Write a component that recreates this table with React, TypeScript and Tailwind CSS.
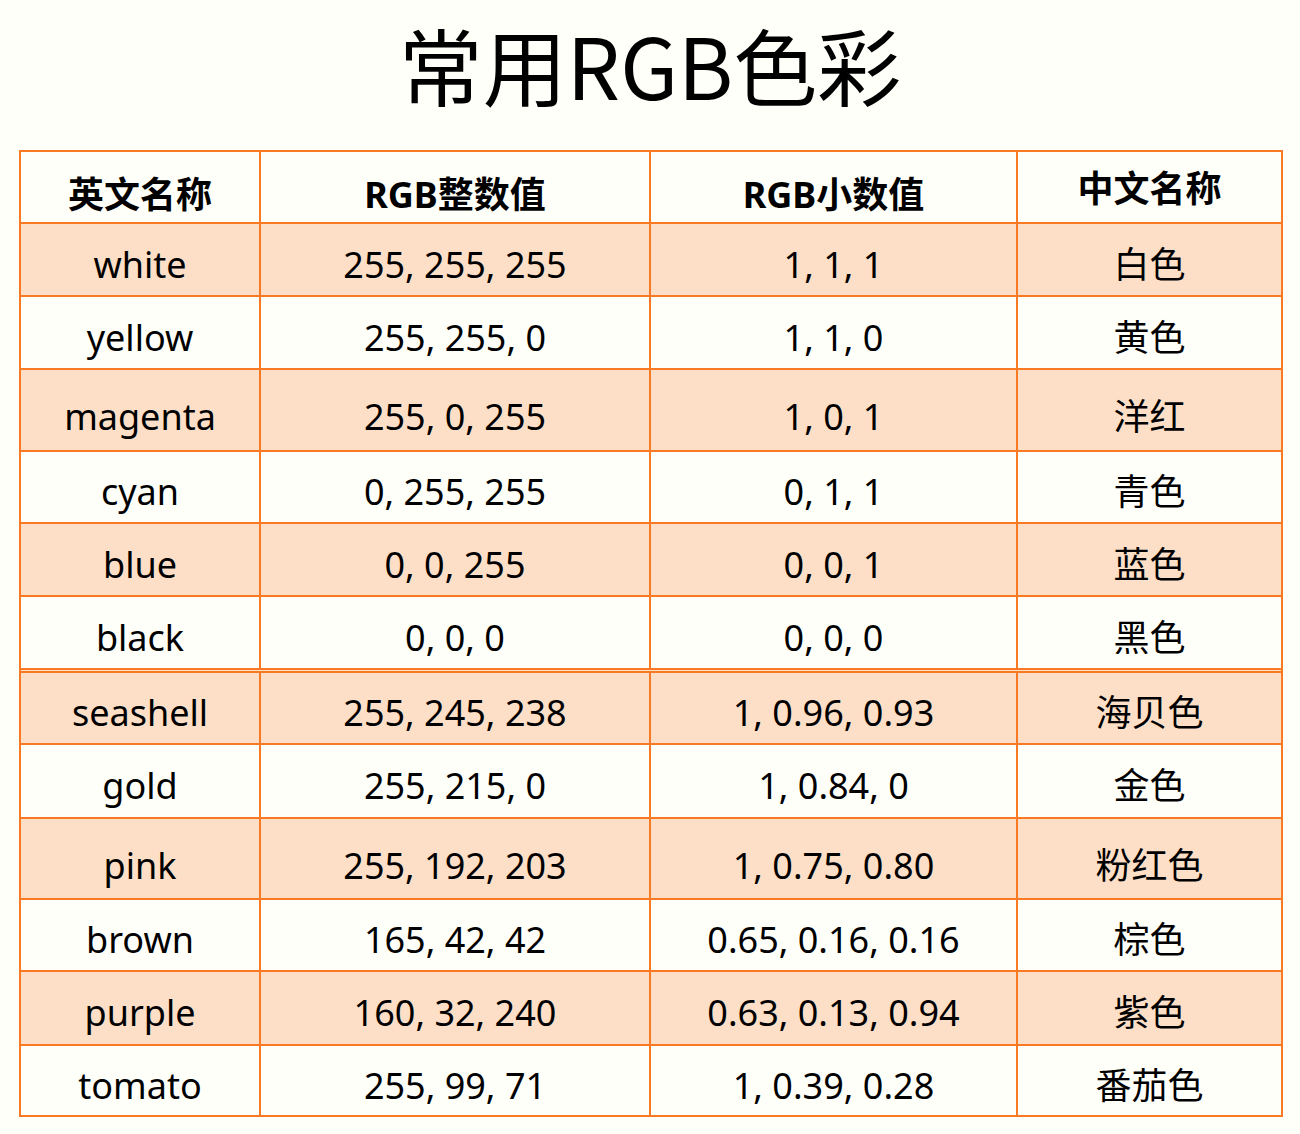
import React from "react";

type Row = {
  en: string;
  int: string;
  dec: string;
  zh: string;
  h: string;
  peach: boolean;
  border: string;
  pt: string;
};

const rows: Row[] = [
  { en: "white", int: "255, 255, 255", dec: "1, 1, 1", zh: "白色", h: "h-[73px]", peach: true, border: "border-t-2", pt: "pt-[10px]" },
  { en: "yellow", int: "255, 255, 0", dec: "1, 1, 0", zh: "黄色", h: "h-[73px]", peach: false, border: "border-t-2", pt: "pt-[10px]" },
  { en: "magenta", int: "255, 0, 255", dec: "1, 0, 1", zh: "洋红", h: "h-[82px]", peach: true, border: "border-t-2", pt: "pt-[14px]" },
  { en: "cyan", int: "0, 255, 255", dec: "0, 1, 1", zh: "青色", h: "h-[72px]", peach: false, border: "border-t-2", pt: "pt-[10px]" },
  { en: "blue", int: "0, 0, 255", dec: "0, 0, 1", zh: "蓝色", h: "h-[73px]", peach: true, border: "border-t-2", pt: "pt-[10px]" },
  { en: "black", int: "0, 0, 0", dec: "0, 0, 0", zh: "黑色", h: "h-[73px]", peach: false, border: "border-t-2", pt: "pt-[10px]" },
  { en: "seashell", int: "255, 245, 238", dec: "1, 0.96, 0.93", zh: "海贝色", h: "h-[75px]", peach: true, border: "border-t-[5px] border-double", pt: "pt-[10px]" },
  { en: "gold", int: "255, 215, 0", dec: "1, 0.84, 0", zh: "金色", h: "h-[74px]", peach: false, border: "border-t-2", pt: "pt-[10px]" },
  { en: "pink", int: "255, 192, 203", dec: "1, 0.75, 0.80", zh: "粉红色", h: "h-[81px]", peach: true, border: "border-t-2", pt: "pt-[14px]" },
  { en: "brown", int: "165, 42, 42", dec: "0.65, 0.16, 0.16", zh: "棕色", h: "h-[72px]", peach: false, border: "border-t-2", pt: "pt-[10px]" },
  { en: "purple", int: "160, 32, 240", dec: "0.63, 0.13, 0.94", zh: "紫色", h: "h-[74px]", peach: true, border: "border-t-2", pt: "pt-[10px]" },
  { en: "tomato", int: "255, 99, 71", dec: "1, 0.39, 0.28", zh: "番茄色", h: "h-[71px]", peach: false, border: "border-t-2", pt: "pt-[10px]" },
];

const cols = "grid grid-cols-[238px_390px_367px_265px]";

export default function App() {
  return (
    <div
      className="w-[1300px] h-[1134px] bg-[#fffffa] text-black"
      style={{ fontFamily: '"Noto Sans", "Noto Sans CJK SC", sans-serif' }}
    >
      <div className="h-[150px] pt-[22px] flex justify-center">
        <h1
          className="text-[84px] leading-none font-normal"
          style={{ fontFamily: '"Noto Sans CJK SC", sans-serif' }}
        >
          常用RGB色彩
        </h1>
      </div>
      <div className="ml-[19px] w-[1264px] border-2 border-[#f97a22]">
        <div className={`${cols} h-[70px] font-bold text-[36px]`}>
          <div className="flex items-center justify-center pt-4">英文名称</div>
          <div className="flex items-center justify-center pt-4 border-l-2 border-[#f97a22]">RGB整数值</div>
          <div className="flex items-center justify-center pt-4 border-l-2 border-[#f97a22]">RGB小数值</div>
          <div className="flex items-center justify-center pt-1 border-l-2 border-[#f97a22]">中文名称</div>
        </div>
        {rows.map((r) => (
          <div
            key={r.en}
            className={`${cols} ${r.h} ${r.border} border-[#f97a22] text-[36px] ${r.peach ? "bg-[#fddfc7]" : "bg-[#fffffa]"}`}
          >
            <div className={`flex items-center justify-center ${r.pt}`}>{r.en}</div>
            <div className={`flex items-center justify-center ${r.pt} border-l-2 border-[#f97a22]`}>{r.int}</div>
            <div className={`flex items-center justify-center ${r.pt} border-l-2 border-[#f97a22]`}>{r.dec}</div>
            <div className={`flex items-center justify-center ${r.pt} border-l-2 border-[#f97a22]`}>{r.zh}</div>
          </div>
        ))}
      </div>
    </div>
  );
}
